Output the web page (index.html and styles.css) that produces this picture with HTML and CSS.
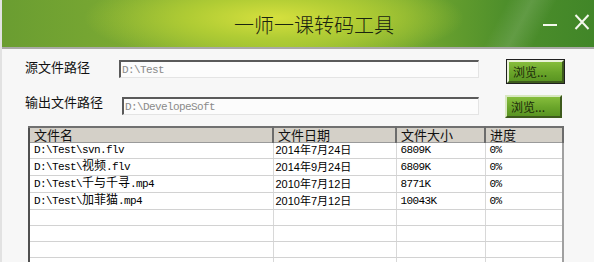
FILE: index.html
```html
<!DOCTYPE html>
<html lang="zh-CN">
<head>
    <meta charset="UTF-8">
    <title>一师一课转码工具</title>
    <link rel="stylesheet" href="styles.css">
</head>
<body>
    <div class="window">
        <div class="titlebar">
            <div class="title">一师一课转码工具</div>
            <div class="controls">
                <svg class="ctl-min" width="16" height="16" viewBox="0 0 16 16"><path d="M1 8 H15" stroke="#f4f8ec" stroke-width="2"/></svg>
                <svg class="ctl-close" width="16" height="16" viewBox="0 0 16 16"><path d="M1.5 1 L14.5 15 M14.5 1 L1.5 15" stroke="#f4f8ec" stroke-width="2"/></svg>
            </div>
        </div>

        <div class="content">
            <div class="path-row first">
                <label class="path-label">源文件路径</label>
                <div class="path-box">D:\Test</div>
                <button class="browse focused">浏览...</button>
            </div>
            <div class="path-row second">
                <label class="path-label">输出文件路径</label>
                <div class="path-box shifted">D:\DevelopeSoft</div>
                <button class="browse">浏览...</button>
            </div>

            <table class="files">
                <colgroup>
                    <col class="c-name">
                    <col class="c-date">
                    <col class="c-size">
                    <col class="c-prog">
                </colgroup>
                <thead>
                    <tr>
                        <th>文件名</th>
                        <th>文件日期</th>
                        <th>文件大小</th>
                        <th>进度</th>
                    </tr>
                </thead>
                <tbody>
                    <tr>
                        <td class="mono">D:\Test\svn.flv</td>
                        <td class="date">2014年7月24日</td>
                        <td class="mono">6809K</td>
                        <td class="mono">0%</td>
                    </tr>
                    <tr>
                        <td class="mono">D:\Test\<span class="cjk">视频</span>.flv</td>
                        <td class="date">2014年9月24日</td>
                        <td class="mono">6809K</td>
                        <td class="mono">0%</td>
                    </tr>
                    <tr>
                        <td class="mono">D:\Test\<span class="cjk">千与千寻</span>.mp4</td>
                        <td class="date">2010年7月12日</td>
                        <td class="mono">8771K</td>
                        <td class="mono">0%</td>
                    </tr>
                    <tr>
                        <td class="mono">D:\Test\<span class="cjk">加菲猫</span>.mp4</td>
                        <td class="date">2010年7月12日</td>
                        <td class="mono">10043K</td>
                        <td class="mono">0%</td>
                    </tr>
                    <tr><td></td><td></td><td></td><td></td></tr>
                    <tr><td></td><td></td><td></td><td></td></tr>
                    <tr><td></td><td></td><td></td><td></td></tr>
                    <tr><td></td><td></td><td></td><td></td></tr>
                </tbody>
            </table>
        </div>
    </div>
</body>
</html>
```

FILE: styles.css
```css
body {
    margin: 0;
    padding: 0;
    background-color: #f6f6f6;
    font-family: "Noto Sans CJK SC", "Liberation Sans", sans-serif;
    color: #111;
}
.window {
    width: 594px;
    height: 262px;
    overflow: hidden;
    background-color: #f7f7f7;
    border-left: 2px solid #e2e2e2;
    box-sizing: border-box;
}

/* 标题栏 */
.titlebar {
    height: 47px;
    display: flex;
    align-items: center;
    border-bottom: 2px solid #a9aaa6;
    background:
        linear-gradient(118deg, transparent 82%, rgba(255, 255, 255, 0.12) 86%, transparent 90%),
        radial-gradient(ellipse 190px 46px at 272px 18px, #d6e03e 0%, #b0cc34 45%, rgba(160, 196, 50, 0) 100%),
        linear-gradient(90deg, #6a9d31 0%, #80ad33 28%, #96bd34 48%, #76a930 68%, #4e8f2b 85%, #418628 100%);
}
.title {
    flex: 1;
    text-align: center;
    padding-left: 84px;
    font-size: 20px;
    font-weight: 300;
    color: #1a2410;
    margin-top: 2px;
}
.controls {
    display: flex;
    align-items: center;
    gap: 16px;
    padding-right: 4px;
}
.ctl-min {
    margin-top: 2px;
}
.ctl-close {
    margin-top: -4px;
}

/* 路径输入 */
.content {
    padding-top: 11px;
}
.path-row {
    display: flex;
    align-items: flex-start;
}
.path-row.second {
    margin-top: 14px;
}
.path-label {
    width: 94px;
    padding-left: 23px;
    font-size: 13px;
    line-height: 14px;
    color: #111;
}
.path-row.second .path-label {
    margin-top: -2px;
}
.path-box {
    width: 356px;
    height: 15px;
    border-top: 2px solid #5a5a5a;
    border-left: 2px solid #5a5a5a;
    border-right: 1px solid #e4e4e4;
    border-bottom: 1px solid #e4e4e4;
    background-color: #fcfcfc;
    font-family: "Liberation Mono", "Noto Sans CJK SC", monospace;
    font-size: 11px;
    letter-spacing: -0.6px;
    line-height: 16px;
    padding-left: 1px;
    color: #8a8a8a;
}
.path-box.shifted {
    margin-left: 3px;
    width: 353px;
}
.browse {
    margin-left: 28px;
    width: 57px;
    height: 23px;
    padding: 0 0 0 4px;
    text-align: left;
    font-family: "Noto Sans CJK SC", sans-serif;
    font-size: 12px;
    color: #1b2a0a;
    background: linear-gradient(180deg, #86bd3c 0%, #6aa52a 55%, #5a9522 100%);
    border-top: 2px solid #d8e8c0;
    border-left: 2px solid #d8e8c0;
    border-right: 2px solid #3d5a1c;
    border-bottom: 2px solid #3d5a1c;
}
.browse.focused {
    outline: 1px solid #202020;
    outline-offset: 0;
    border-top-color: #eaf2da;
    border-left-color: #eaf2da;
}
.path-row.second .browse {
    margin-top: -2px;
    margin-left: 26px;
}

/* 文件列表 */
.files {
    margin-top: 8px;
    margin-left: 26px;
    width: 534px;
    table-layout: fixed;
    border-collapse: collapse;
    border-top: 2px solid #707070;
    border-left: 2px solid #505050;
    border-right: 2px solid #a0a0a0;
    background-color: #fff;
}
.c-name { width: 244px; }
.c-date { width: 123px; }
.c-size { width: 89px; }
.c-prog { width: 78px; }
th {
    height: 14px;
    padding: 0 0 0 4px;
    text-align: left;
    font-weight: normal;
    font-size: 13px;
    line-height: 14px;
    background-color: #d4d0c8;
    border-right: 2px solid #6c6c6c;
    border-bottom: 1px solid #9a9a9a;
    color: #111;
}
td {
    height: 15px;
    padding: 0 0 0 4px;
    font-size: 11px;
    line-height: 15px;
    border-right: 1px solid #d8d8d8;
    border-bottom: 1px solid #d2d2d2;
    white-space: nowrap;
    overflow: hidden;
    color: #000;
}
td.mono {
    font-family: "Liberation Mono", "Noto Sans CJK SC", monospace;
    letter-spacing: -0.6px;
}
td .cjk {
    font-family: "Noto Sans CJK SC", sans-serif;
    font-size: 12px;
    line-height: 1;
    letter-spacing: 0;
}
td.date {
    font-family: "Liberation Sans", "Noto Sans CJK SC", sans-serif;
    padding-left: 2px;
}
```
